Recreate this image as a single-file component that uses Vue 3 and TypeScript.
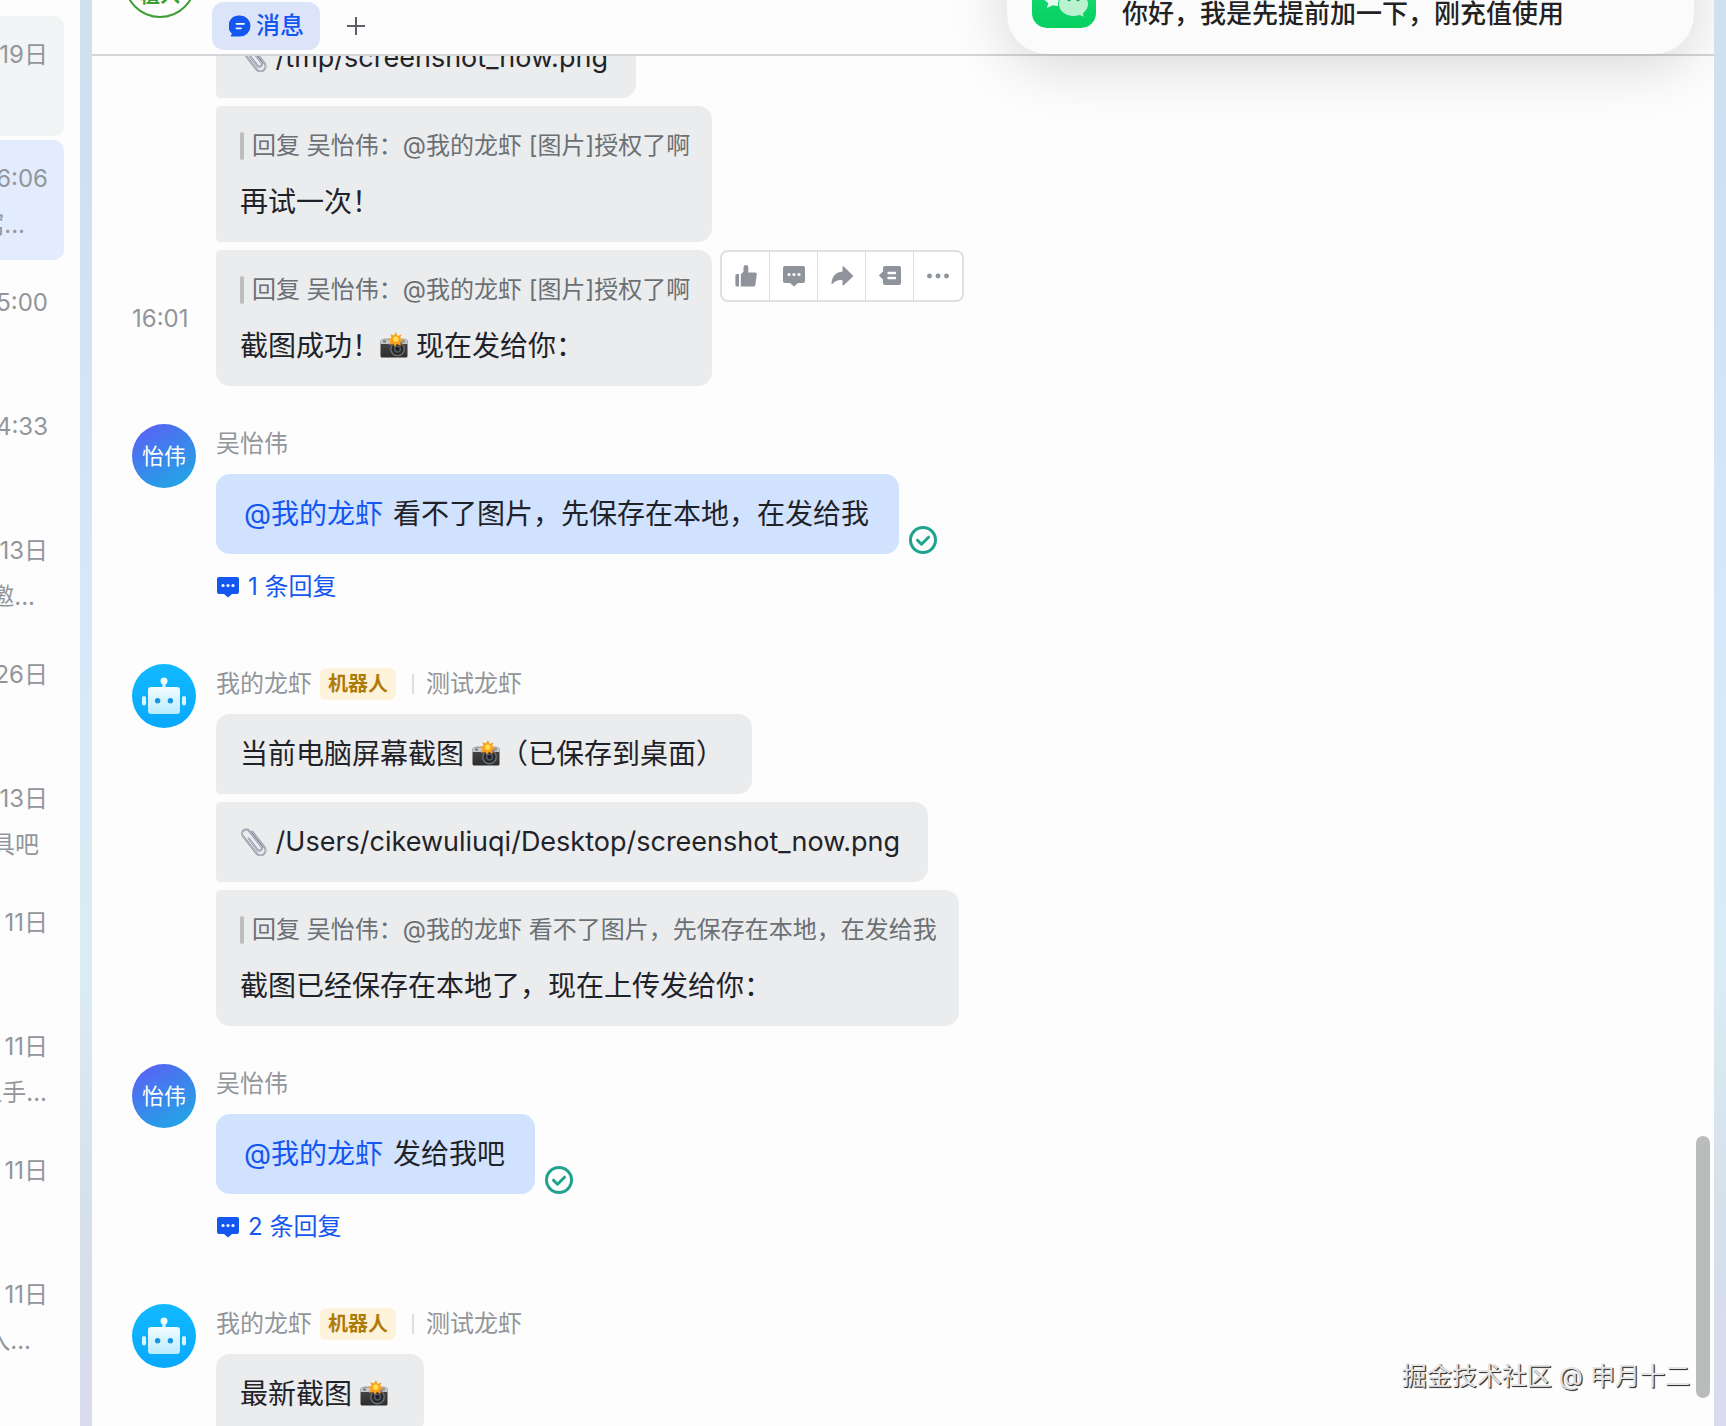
<script setup lang="ts">
interface Conversation {
  time: string
  snippet?: string
  trail?: number
  state?: 'muted' | 'active'
}

interface Part {
  kind: 'text' | 'path' | 'mention' | 'camera' | 'clip'
  value?: string
}

interface Bubble {
  quote?: string
  parts: Part[]
  time?: string
  hovered?: boolean
}

interface Group {
  author?: 'user' | 'bot'
  bubbles: Bubble[]
  replies?: number
}

const conversations: Conversation[] = [
  { time: '19日', state: 'muted' },
  { time: '16:06', snippet: '窝...', trail: 23, state: 'active' },
  { time: '15:00' },
  { time: '14:33' },
  { time: '13日', snippet: '邀...', trail: 13 },
  { time: '26日' },
  { time: '13日', snippet: '具吧', trail: 9 },
  { time: '11日' },
  { time: '11日', snippet: '上手...', trail: 1 },
  { time: '11日' },
  { time: '11日', snippet: '入...', trail: 17 },
]

const text = (value: string): Part => ({ kind: 'text', value })
const path = (value: string): Part => ({ kind: 'path', value })
const mention: Part = { kind: 'mention', value: '@我的龙虾' }
const camera: Part = { kind: 'camera' }
const clip: Part = { kind: 'clip' }

const groups: Group[] = [
  {
    bubbles: [
      { parts: [clip, path(' /tmp/screenshot_now.png')] },
      { quote: '回复 吴怡伟：@我的龙虾 [图片]授权了啊', parts: [text('再试一次！')] },
      {
        quote: '回复 吴怡伟：@我的龙虾 [图片]授权了啊',
        parts: [text('截图成功！'), camera, text(' 现在发给你：')],
        time: '16:01',
        hovered: true,
      },
    ],
  },
  {
    author: 'user',
    bubbles: [{ parts: [mention, text(' 看不了图片，先保存在本地，在发给我')] }],
    replies: 1,
  },
  {
    author: 'bot',
    bubbles: [
      { parts: [text('当前电脑屏幕截图 '), camera, text('（已保存到桌面）')] },
      { parts: [clip, path(' /Users/cikewuliuqi/Desktop/screenshot_now.png')] },
      {
        quote: '回复 吴怡伟：@我的龙虾 看不了图片，先保存在本地，在发给我',
        parts: [text('截图已经保存在本地了，现在上传发给你：')],
      },
    ],
  },
  {
    author: 'user',
    bubbles: [{ parts: [mention, text(' 发给我吧')] }],
    replies: 2,
  },
  {
    author: 'bot',
    bubbles: [
      { parts: [text('最新截图 '), camera, text(' ')] },
      { parts: [clip, path(' /tmp/latest.png')] },
    ],
  },
]

const actions = [
  { name: 'thumb', label: '点赞' },
  { name: 'chat', label: '回复' },
  { name: 'forward', label: '转发' },
  { name: 'topic', label: '话题' },
  { name: 'more', label: '更多' },
]
</script>

<template>
  <div class="app">
    <svg class="defs" aria-hidden="true">
      <defs>
        <linearGradient id="body-grad" x1="0" y1="0" x2="0" y2="1">
          <stop offset="0" stop-color="#f2fcff" />
          <stop offset="1" stop-color="#b9ebff" />
        </linearGradient>
        <linearGradient id="bot-grad" x1="0" y1="0" x2="0" y2="1">
          <stop offset="0" stop-color="#12b9ff" />
          <stop offset="1" stop-color="#08a8fb" />
        </linearGradient>
        <linearGradient id="camera-grad" x1="0" y1="0" x2="0" y2="1">
          <stop offset="0" stop-color="#4a4a4a" />
          <stop offset="1" stop-color="#2c2c2c" />
        </linearGradient>
        <linearGradient id="wechat-grad" x1="0" y1="0" x2="0" y2="1">
          <stop offset="0" stop-color="#1fe07a" />
          <stop offset="1" stop-color="#06cf60" />
        </linearGradient>
      </defs>
      <symbol id="camera" viewBox="0 0 28 28">
        <path d="M2 8.500 4 6h20l2 2.500z" fill="#c9cbcc" />
        <rect x="0.500" y="7.500" width="27" height="18" rx="1.500" fill="url(#camera-grad)" />
        <path d="M0.500 12V9a1.500 1.500 0 0 1 1.500-1.500h24A1.500 1.500 0 0 1 27.500 9v3z" fill="#c4c6c8" />
        <rect x="3" y="8.500" width="3" height="2" fill="#777" />
        <rect x="21" y="8.500" width="4" height="2" fill="#888" />
        <circle cx="17.500" cy="17" r="7.500" fill="#6b6d70" />
        <circle cx="17.500" cy="17" r="6" fill="#26282b" />
        <circle cx="17.500" cy="17" r="3.800" fill="#4c5560" />
        <circle cx="17.500" cy="17" r="2" fill="#1b1d20" />
        <path d="M16 0l1.500 4 4-1.500-1.500 4 3.500 1.500-3.500 2 1 4-4-2-2.500 3-1-3.500-4.500 1.500 1.500-4L7.500 7l4-1-1-4 3.500 1.500z" fill="#f9a01f" />
        <circle cx="15.800" cy="7.200" r="2.600" fill="#ffe14a" />
      </symbol>
      <symbol id="clip" viewBox="0 0 28 28">
        <g fill="none" stroke-linecap="round" transform="rotate(-38 14 14)">
          <path d="M19 5V24.500a5 5 0 0 1-10 0V2.500a4 4 0 0 1 8 0V22a2.500 2.500 0 0 1-5 0V8" stroke="#858b99" stroke-width="2" />
          <path d="M19 5V24.500a5 5 0 0 1-10 0V2.500a4 4 0 0 1 8 0V22a2.500 2.500 0 0 1-5 0V8" stroke="#ccd1dc" stroke-width="0.800" />
        </g>
      </symbol>
      <symbol id="chat" viewBox="0 0 22 22">
        <path d="M2 1h18a2 2 0 0 1 2 2v13a2 2 0 0 1-2 2h-5l-4 3.500L7 18H2a2 2 0 0 1-2-2V3a2 2 0 0 1 2-2z" fill="currentColor" />
        <g fill="#fff">
          <circle cx="6" cy="9.500" r="1.600" />
          <circle cx="11" cy="9.500" r="1.600" />
          <circle cx="16" cy="9.500" r="1.600" />
        </g>
      </symbol>
      <symbol id="thumb" viewBox="0 0 22 22">
        <path d="M2 9h2v12.500H2a1.600 1.600 0 0 1-1.600-1.600v-9.300A1.600 1.600 0 0 1 2 9z" fill="currentColor" />
        <path d="M5.800 21.500V9.200l2.700-2.400V2.500a2.400 2.400 0 0 1 4.800 0V7.500h6.800a1.700 1.700 0 0 1 1.700 1.900l-1.500 10.500a1.900 1.900 0 0 1-1.900 1.600z" fill="currentColor" />
      </symbol>
      <symbol id="forward" viewBox="0 0 22 22">
        <path d="M11.500 2v4.500C4.500 7 .800 12 .500 18.500c0 .800.800.900 1.200.300C4 15.800 7 14.700 11.500 15v4.800c0 .700.700 1 1.200.500l9-8.600a1 1 0 0 0 0-1.400l-9-8.800c-.500-.500-1.200-.200-1.200.500z" fill="currentColor" />
      </symbol>
      <symbol id="topic" viewBox="0 0 22 22">
        <path d="M6 1h14a2 2 0 0 1 2 2v15a2 2 0 0 1-2 2H6a2 2 0 0 1-2-2v-3.500L.300 11a.800.800 0 0 1 0-1L4 6.500V3a2 2 0 0 1 2-2z" fill="currentColor" />
        <path d="M9.500 8h6.500M9.500 13h6.500" stroke="#fff" stroke-width="2.400" stroke-linecap="round" />
      </symbol>
      <symbol id="more" viewBox="0 0 24 22">
        <g fill="currentColor">
          <circle cx="2.700" cy="11" r="2.700" />
          <circle cx="12" cy="11" r="2.700" />
          <circle cx="21.300" cy="11" r="2.700" />
        </g>
      </symbol>
    </svg>

    <aside class="sidebar">
      <ul class="conversations">
        <li v-for="(c, i) in conversations" :key="i" class="conversation" :class="c.state">
          <span class="when">{{ c.time }}</span>
          <span v-if="c.snippet" class="snippet" :style="{ marginRight: `${c.trail}px` }">{{ c.snippet }}</span>
        </li>
      </ul>
    </aside>

    <main class="chat">
      <header class="topbar">
        <div class="chat-logo">植入</div>
        <nav class="tabs">
          <button class="tab" type="button">
            <svg class="tab-icon" viewBox="0 0 22 22" aria-hidden="true">
              <path d="M11 .500a10.500 10.500 0 1 1 0 21H2.500c-.800 0-1-.800-.500-1.300l1-1.400A10.500 10.500 0 0 1 11 .500z" fill="currentColor" />
              <path d="M7.500 8.800h7.500M7.500 13.300h4.500" stroke="#fff" stroke-width="1.800" stroke-linecap="round" />
            </svg>
            <span>消息</span>
          </button>
          <button class="add" type="button" aria-label="添加标签页">
            <svg viewBox="0 0 20 20" aria-hidden="true">
              <path d="M10 1v18M1 10h18" stroke="#5c6066" stroke-width="2" />
            </svg>
          </button>
        </nav>
      </header>

      <section class="viewport">
        <div class="stream">
          <article v-for="(g, gi) in groups" :key="gi" class="group" :class="g.author">
            <div v-if="g.author" class="avatar">
              <span v-if="g.author === 'user'">怡伟</span>
              <svg v-else viewBox="0 0 64 64" aria-label="机器人头像">
                <circle cx="32" cy="32" r="32" fill="url(#bot-grad)" />
                <circle cx="32" cy="17" r="3.500" fill="#f2fcff" />
                <rect x="30.500" y="18" width="3" height="7" fill="#f2fcff" />
                <rect x="16" y="23" width="32" height="27" rx="3" fill="url(#body-grad)" />
                <rect x="10" y="32" width="4" height="9.500" rx="2" fill="#d9f5ff" />
                <rect x="50" y="32" width="4" height="9.500" rx="2" fill="#d9f5ff" />
                <circle cx="25.600" cy="36.700" r="2.700" fill="#1596dd" />
                <circle cx="38.400" cy="36.700" r="2.700" fill="#1596dd" />
              </svg>
            </div>
            <div v-if="g.author" class="byline">
              <span>{{ g.author === 'user' ? '吴怡伟' : '我的龙虾' }}</span>
              <template v-if="g.author === 'bot'">
                <span class="tag">机器人</span>
                <span class="rule"></span>
                <span>测试龙虾</span>
              </template>
            </div>
            <div class="bubbles">
              <div v-for="(b, bi) in g.bubbles" :key="bi" class="row">
                <time v-if="b.time" class="stamp">{{ b.time }}</time>
                <div class="bubble">
                  <blockquote v-if="b.quote" class="quote">{{ b.quote }}</blockquote>
                  <p class="line">
                    <template v-for="(p, pi) in b.parts" :key="pi">
                      <a v-if="p.kind === 'mention'" class="mention" href="#">{{ p.value }}</a>
                      <span v-else-if="p.value" :class="p.kind">{{ p.value }}</span>
                      <svg v-else class="emoji" role="img" :aria-label="p.kind"><use :href="`#${p.kind}`" /></svg>
                    </template>
                  </p>
                </div>
                <svg v-if="g.author === 'user'" class="read" viewBox="0 0 28 28" role="img" aria-label="已读">
                  <circle cx="14" cy="14" r="12.500" fill="none" stroke="#1fa38d" stroke-width="3" />
                  <path d="M8.500 14.200l4 4 7-7" fill="none" stroke="#1fa38d" stroke-width="3" stroke-linecap="round" stroke-linejoin="round" />
                </svg>
                <div v-if="b.hovered" class="toolbar">
                  <button v-for="a in actions" :key="a.name" class="action" type="button" :aria-label="a.label">
                    <svg aria-hidden="true"><use :href="`#${a.name}`" /></svg>
                  </button>
                </div>
              </div>
            </div>
            <button v-if="g.replies" class="thread" type="button">
              <svg aria-hidden="true"><use href="#chat" /></svg>
              <span>{{ g.replies }} 条回复</span>
            </button>
          </article>
        </div>
      </section>

      <div class="scrollbar"></div>

      <div class="toast">
        <svg class="wechat" viewBox="0 0 64 64" aria-label="微信">
          <rect width="64" height="64" rx="15" fill="url(#wechat-grad)" />
          <path d="M26 14c9.500 0 17 6.300 17 14s-7.500 14-17 14c-1.800 0-3.600-.200-5.200-.700L15 44l1.200-5C12 36.300 9 32.500 9 28c0-7.700 7.500-14 17-14z" fill="#e6fbef" />
          <path d="M41.500 27.500c8.300 0 15 5.600 15 12.500 0 3.700-2 6.900-5 9.200l.700 4.300-4.600-2.100a18 18 0 0 1-6.100 1.100c-8.300 0-15-5.600-15-12.500s6.700-12.500 15-12.500z" fill="#b9f2cf" stroke="#12cf67" stroke-width="1" />
          <circle cx="37" cy="35.500" r="1.700" fill="#0c9c4b" />
          <circle cx="46" cy="35.500" r="1.700" fill="#0c9c4b" />
        </svg>
        <p>你好，我是先提前加一下，刚充值使用</p>
      </div>

      <div class="credit">掘金技术社区 @ 申月十二</div>
    </main>
  </div>
</template>

<style>
body {
  margin: 0;
}
</style>

<style scoped>
.app {
  display: flex;
  height: 100vh;
  overflow: hidden;
  padding-right: 12px;
  box-sizing: border-box;
  background: linear-gradient(#cfe0ee 0%, #cfe1f2 15%, #d6e7f9 40%, #dcecf4 68%, #d6e0ea 85%, #d9dbed 100%);
  font-family: Inter, "Noto Sans CJK SC", sans-serif;
  font-size: 24px;
  line-height: 32px;
  color: #1f2329;
}

.defs {
  position: absolute;
  width: 0;
  height: 0;
}

button {
  border: 0;
  padding: 0;
  background: none;
  font: inherit;
  color: inherit;
}

p,
blockquote,
ul {
  margin: 0;
  padding: 0;
}

.sidebar {
  flex: 0 0 80px;
  margin-right: 12px;
  background: #fdfdfd;
  overflow: hidden;
}

.conversations {
  display: flex;
  flex-direction: column;
  gap: 4px;
  padding-top: 16px;
  margin-right: 16px;
  list-style: none;
}

.conversation {
  flex: none;
  display: flex;
  flex-direction: column;
  align-items: flex-end;
  gap: 14px;
  height: 120px;
  box-sizing: border-box;
  padding: 23px 16px 0 0;
  border-radius: 0 10px 10px 0;
  white-space: nowrap;
  color: #92969b;
}

.muted {
  background: #f2f4f5;
}

.active {
  background: #e2ecfd;
}

.chat {
  position: relative;
  flex: 1;
  min-width: 0;
  display: flex;
  flex-direction: column;
  background: #fdfdfd;
  overflow: hidden;
}

.topbar {
  flex: none;
  display: flex;
  align-items: flex-end;
  gap: 16px;
  height: 56px;
  box-sizing: border-box;
  padding-left: 32px;
  border-bottom: 2px solid #d4d5d6;
}

.chat-logo {
  display: flex;
  align-items: flex-end;
  justify-content: center;
  width: 72px;
  height: 72px;
  box-sizing: border-box;
  margin-bottom: 36px;
  padding-bottom: 8px;
  border: 2px solid #3f9f37;
  border-radius: 50%;
  background: #fff;
  font-size: 20px;
  line-height: 24px;
  font-weight: 700;
  color: #3f9f37;
}

.tabs {
  display: flex;
  align-items: center;
  gap: 26px;
  padding-bottom: 4px;
}

.tab {
  display: flex;
  align-items: center;
  gap: 5px;
  height: 48px;
  padding: 0 16px 0 17px;
  border-radius: 12px;
  background: #dbe4f9;
  font-weight: 500;
  color: #1456f0;
}

.tab-icon {
  width: 22px;
  height: 22px;
}

.add,
.add svg {
  display: block;
  width: 20px;
  height: 20px;
}

.viewport {
  flex: 1;
  min-height: 0;
  overflow: hidden;
}

.stream {
  display: flex;
  flex-direction: column;
  gap: 38px;
  margin-top: -38px;
  padding-left: 40px;
}

.group {
  display: grid;
  grid-template-columns: 64px 1fr;
  column-gap: 20px;
}

.avatar {
  display: flex;
  align-items: center;
  justify-content: center;
  width: 64px;
  height: 64px;
  grid-row: 1 / 3;
  border-radius: 50%;
  font-size: 22px;
  color: #fff;
}

.avatar svg {
  width: 64px;
  height: 64px;
}

.user .avatar {
  background: linear-gradient(150deg, #5b5ff5 5%, #3b86ec 50%, #1fa9e4 95%);
}

.byline {
  display: flex;
  align-items: center;
  height: 40px;
  margin-bottom: 10px;
  color: #929599;
}

.tag {
  margin-left: 8px;
  padding: 0 8px;
  border-radius: 6px;
  background: #fff2da;
  font-size: 20px;
  font-weight: 700;
  color: #ad7b07;
}

.rule {
  width: 2px;
  height: 20px;
  margin: 0 12px 0 16px;
  background: #dcdee0;
}

.bubbles {
  grid-column: 2;
  display: flex;
  flex-direction: column;
  gap: 8px;
}

.row {
  position: relative;
  display: flex;
}

.stamp {
  position: absolute;
  right: 100%;
  top: 50%;
  width: 84px;
  margin-top: -15px;
  color: #92969b;
}

.bubble {
  padding: 20px 24px;
  border-radius: 4px 14px 14px 4px;
  background: #ebeced;
}

.row:first-child .bubble {
  border-top-left-radius: 14px;
}

.row:last-child .bubble {
  border-bottom-left-radius: 14px;
}

.user .bubble {
  background: #d1e2ff;
}

.quote {
  display: flex;
  align-items: center;
  gap: 8px;
  margin: 4px -2px 20px 0;
  color: #6b7075;
}

.quote::before {
  content: "";
  width: 4px;
  height: 28px;
  border-radius: 2px;
  background: #bbbdbf;
}

.line {
  display: flex;
  align-items: center;
  padding-right: 4px;
  font-size: 28px;
  line-height: 40px;
  white-space: pre;
}

.user .line {
  padding-right: 6px;
}

.path {
  font-size: 27px;
}

.emoji {
  width: 28px;
  height: 28px;
}

.mention {
  padding: 0 2px 0 4px;
  color: #1456f0;
  text-decoration: none;
}

.read {
  align-self: flex-end;
  width: 28px;
  height: 28px;
  margin-left: 10px;
}

.toolbar {
  display: flex;
  align-self: flex-start;
  margin-left: 8px;
  border: 2px solid #dfe0e1;
  border-radius: 8px;
  background: #fff;
}

.action {
  display: flex;
  align-items: center;
  justify-content: center;
  width: 48px;
  height: 48px;
  color: #8f939b;
}

.action + .action {
  box-shadow: -1px 0 #dcddde;
}

.action svg,
.thread svg {
  width: 22px;
  height: 22px;
}

.thread {
  grid-column: 2;
  justify-self: start;
  display: flex;
  align-items: center;
  gap: 9px;
  height: 34px;
  margin: 16px 0 22px 1px;
  color: #1456f0;
}

.scrollbar {
  position: absolute;
  right: 4px;
  bottom: 28px;
  width: 14px;
  height: 262px;
  border-radius: 7px;
  background: #babcbc;
}

.toast {
  position: absolute;
  top: -62px;
  right: 20px;
  display: flex;
  align-items: flex-end;
  gap: 26px;
  width: 687px;
  height: 116px;
  box-sizing: border-box;
  padding: 0 24px 26px 25px;
  border-radius: 40px;
  background: #fbfbfb;
  box-shadow: 0 10px 60px rgba(0, 0, 0, 0.16);
}

.toast p {
  font-size: 26px;
  line-height: 28px;
  font-weight: 500;
  color: #222;
}

.wechat {
  width: 64px;
  height: 64px;
}

.credit {
  position: absolute;
  right: 24px;
  bottom: 34px;
  font-size: 25px;
  color: #e4e4e4;
  text-shadow: 1px 1px 1px #333, 1px 1px 0 #555;
}
</style>
